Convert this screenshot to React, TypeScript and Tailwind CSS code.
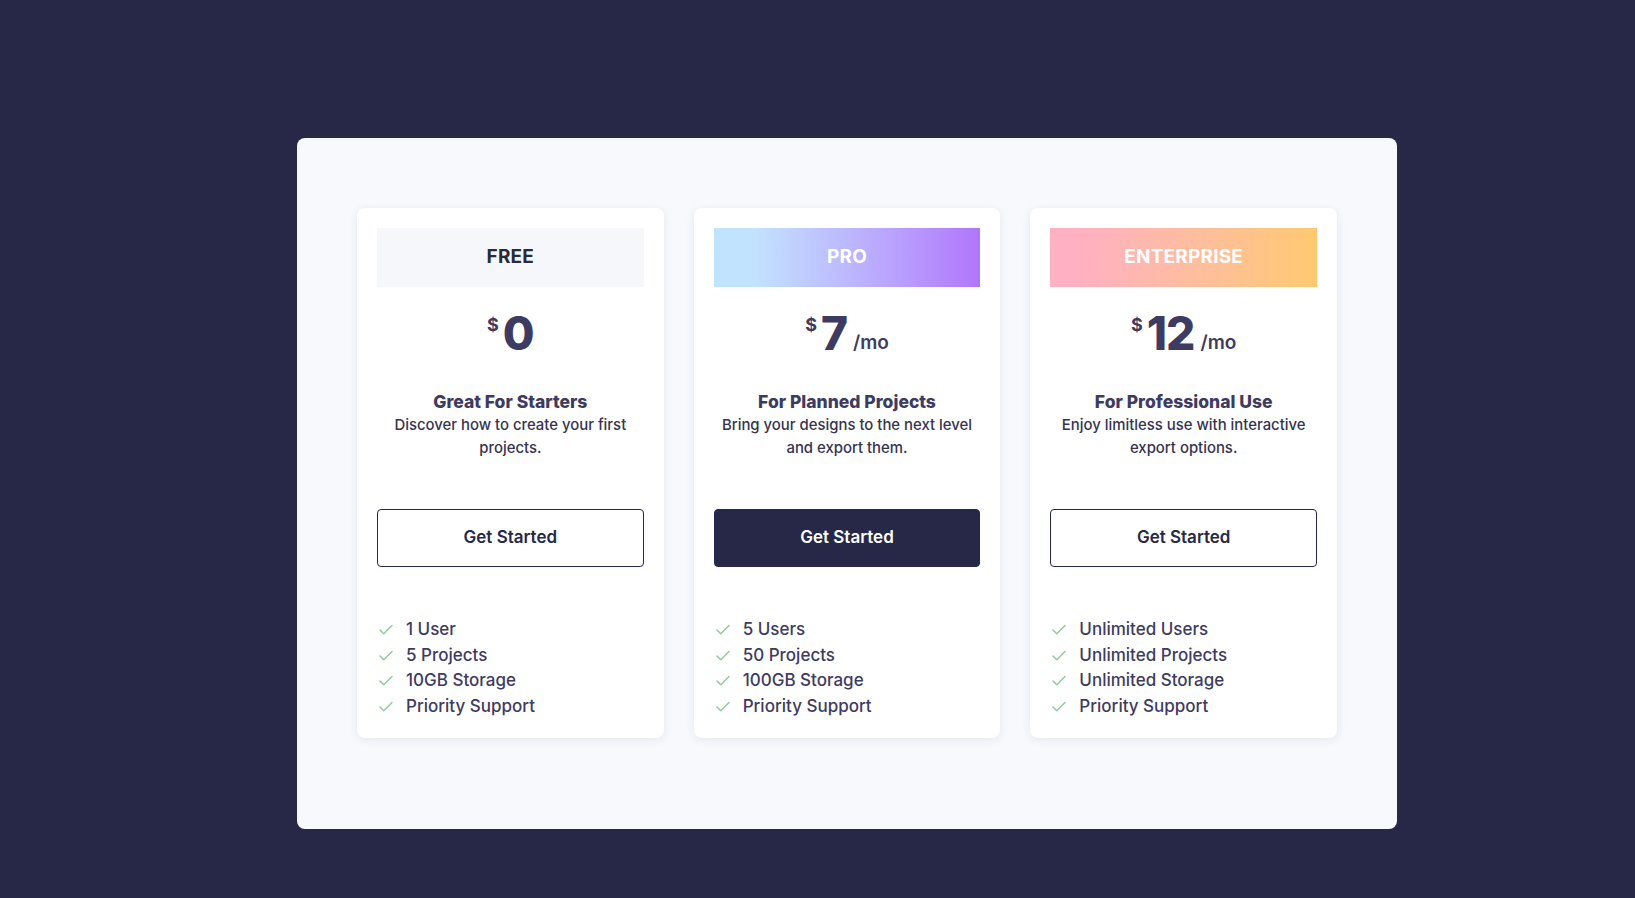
import { Check } from "lucide-react";

type Plan = {
  name: string;
  price: string;
  perMonth: boolean;
  title: string;
  description: string;
  features: string[];
  headerClass: string;
  featured?: boolean;
};

const plans: Plan[] = [
  {
    name: "FREE",
    price: "0",
    perMonth: false,
    title: "Great For Starters",
    description: "Discover how to create your first projects.",
    features: ["1 User", "5 Projects", "10GB Storage", "Priority Support"],
    headerClass: "bg-[#f6f7fb] text-[#2b2b38]",
  },
  {
    name: "PRO",
    price: "7",
    perMonth: true,
    title: "For Planned Projects",
    description: "Bring your designs to the next level and export them.",
    features: ["5 Users", "50 Projects", "100GB Storage", "Priority Support"],
    headerClass: "bg-gradient-to-r from-[#c2e3fe] from-15% to-[#b175fc] text-white",
    featured: true,
  },
  {
    name: "ENTERPRISE",
    price: "12",
    perMonth: true,
    title: "For Professional Use",
    description: "Enjoy limitless use with interactive export options.",
    features: ["Unlimited Users", "Unlimited Projects", "Unlimited Storage", "Priority Support"],
    headerClass: "bg-gradient-to-r from-[#ffb0c2] from-10% to-[#ffc96f] text-white",
  },
];

function PlanCard({ plan }: { plan: Plan }) {
  return (
    <div className="flex w-[307px] flex-col rounded-lg bg-white p-5 pb-[18px] shadow-[0_2px_10px_rgba(30,30,70,0.08)]">
      <div className={`flex h-[59px] items-center justify-center text-[19px] font-bold tracking-[0.2px] ${plan.headerClass}`}>
        {plan.name}
      </div>

      <div className="mt-[18px] flex h-[56px] items-center justify-center text-[#3e3b62]">
        <span className="mr-[4px] -mt-[18px] text-[18px] font-bold">$</span>
        <span className="text-[46px] font-extrabold leading-none tracking-[-1px]">{plan.price}</span>
        {plan.perMonth ? <span className="ml-[6px] mt-[20px] text-[19px] font-semibold">/mo</span> : null}
      </div>

      <h3 className="mt-[30px] text-center text-[17.5px] font-extrabold leading-[22px] text-[#3e3b62]">{plan.title}</h3>
      <p className="mx-auto mt-[1px] h-[46px] max-w-[260px] text-center text-[14.9px] font-medium leading-[23px] text-[#36344f]">
        {plan.description}
      </p>

      <button
        className={`mt-[49px] h-[58px] w-full rounded-[4px] border border-[#272748] text-[17px] font-semibold ${
          plan.featured ? "bg-[#272748] text-white" : "bg-white text-[#272748]"
        }`}
      >
        Get Started
      </button>

      <ul className="mt-[50px] flex flex-col">
        {plan.features.map((feature) => (
          <li key={feature} className="flex h-[25.7px] items-center text-[17px] font-medium text-[#3e3b62]">
            <Check aria-hidden="true" className="mr-[11px] h-[18px] w-[18px] text-[#8fcaa0]" strokeWidth={2} />
            {feature}
          </li>
        ))}
      </ul>
    </div>
  );
}

export default function App() {
  return (
    <div className="min-h-[898px] bg-[#272748] pt-[138px] font-['Inter','Noto_Sans',sans-serif]">
      <main className="ml-[297px] w-[1100px] rounded-lg bg-[#f8f9fd] px-[60px] pb-[91px] pt-[70px]">
        <div className="flex gap-[30px]">
          {plans.map((plan) => (
            <PlanCard key={plan.name} plan={plan} />
          ))}
        </div>
      </main>
    </div>
  );
}
